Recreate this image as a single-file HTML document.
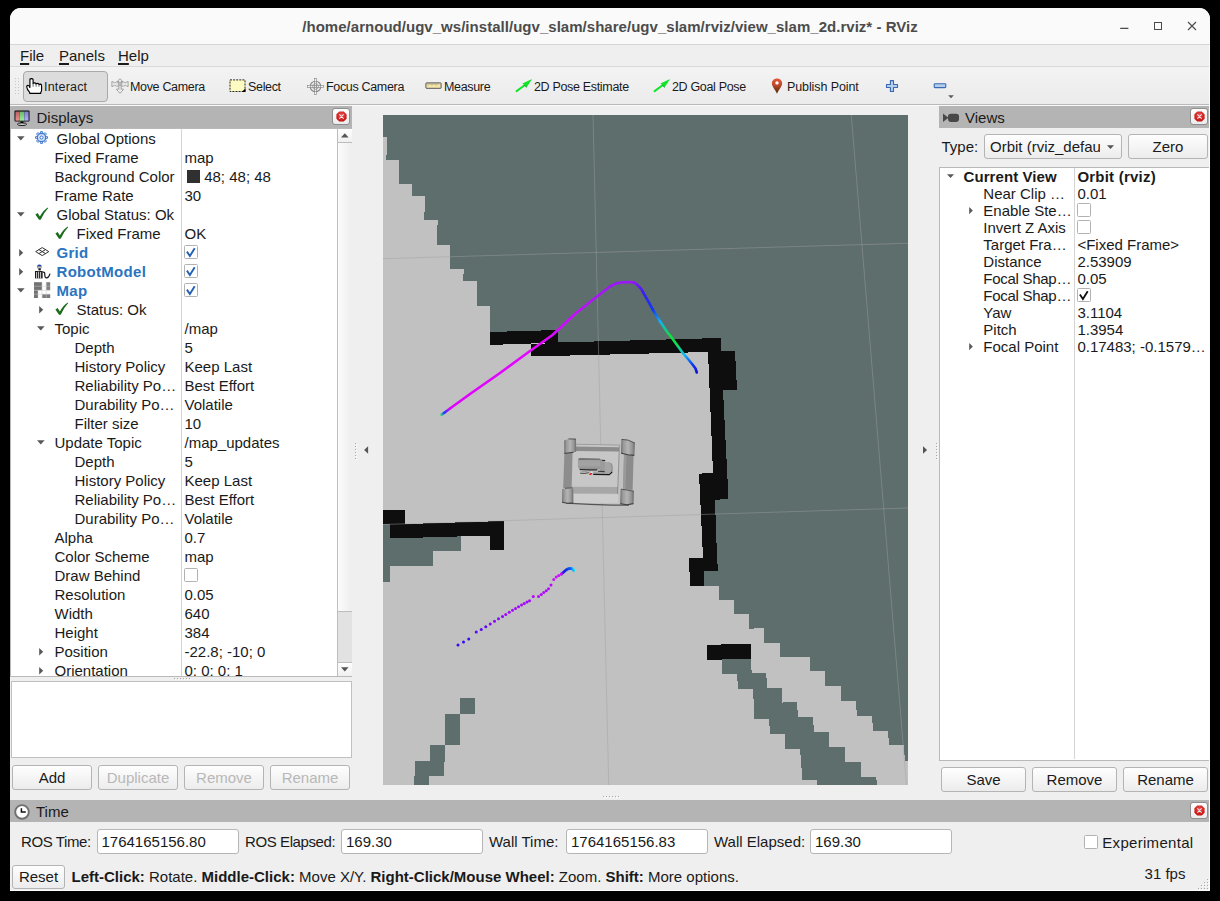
<!DOCTYPE html>
<html>
<head>
<meta charset="utf-8">
<title>RViz</title>
<style>
*{box-sizing:border-box;margin:0;padding:0}
html,body{width:1220px;height:901px;overflow:hidden;background:#000}
body{font-family:"Liberation Sans",sans-serif;font-size:15px;color:#1a1a1a;position:relative}
.abs{position:absolute}
#win{position:absolute;left:10px;top:8px;width:1200px;height:883px;background:#efefef;border-radius:11px 11px 0 0;overflow:hidden}
/* coordinates inside #win are page coords minus (10,8) */
#titlebar{position:absolute;left:0;top:0;width:1200px;height:37px;background:#fafafa;border-bottom:1px solid #d6d6d6}
#title{position:absolute;left:0;top:10px;width:1200px;text-align:center;font-weight:bold;font-size:15px;letter-spacing:0.03px;color:#4c4c4c;white-space:pre}
#menubar{position:absolute;left:0;top:37px;width:1200px;height:22px;background:#efefef;border-bottom:1px solid #d9d9d9}
.menu{position:absolute;top:2px;font-size:15px;color:#1a1a1a}
.menu u{text-decoration:underline;text-underline-offset:2px;text-decoration-thickness:1.6px}
#toolbar{position:absolute;left:0;top:59px;width:1200px;height:38px;background:linear-gradient(#f3f3f3,#ebebeb);border-bottom:1px solid #b9b9b9}
.tb{position:absolute;top:13px;font-size:12.5px;letter-spacing:-0.33px;color:#1a1a1a;white-space:pre;line-height:14px}
.dockhead{position:absolute;background:#b4b4b4;height:22px;font-size:15px;color:#1a1a1a}
.dockhead span{position:absolute;top:3px}
.closebtn{position:absolute;width:18px;height:17px;border:1px solid #8e8e8e;border-radius:3px;background:linear-gradient(#ffffff,#ebebeb)}
.closebtn svg{position:absolute;left:2.5px;top:1.5px}
.tree{position:absolute;background:#fff;overflow:hidden}
.row{position:absolute;left:0;height:19px;width:100%;white-space:pre;line-height:19px}
.row span{position:absolute;top:0}
.blue{color:#2b74c0;font-weight:bold;letter-spacing:0.3px}
.btn{position:absolute;height:25px;border:1px solid #b4b4b4;border-radius:3px;background:linear-gradient(#fefefe,#ececec);text-align:center;line-height:24px;font-size:15px;color:#1a1a1a}
.btn.dis{color:#b8b8b8}
.inp{position:absolute;height:25px;border:1px solid #b6b6b6;border-radius:3px;background:#fff;line-height:24px;padding-left:4px;font-size:15px}
.cb{position:absolute;width:14px;height:14px;border:1px solid #b2b2b2;background:#fff;border-radius:1.5px}
.lbl{position:absolute;white-space:pre;font-size:15px}
</style>
</head>
<body>
<svg width="0" height="0" style="position:absolute">
  <defs>
    <symbol id="i-gear" viewBox="0 0 17 17">
      <g transform="translate(6.5,7.5)">
        <g fill="#cfe0f7" stroke="#3d76cc" stroke-width="0.9">
          <rect x="-1.1" y="-6" width="2.2" height="12" rx="0.4"/>
          <rect x="-1.1" y="-6" width="2.2" height="12" rx="0.4" transform="rotate(45)"/>
          <rect x="-1.1" y="-6" width="2.2" height="12" rx="0.4" transform="rotate(90)"/>
          <rect x="-1.1" y="-6" width="2.2" height="12" rx="0.4" transform="rotate(135)"/>
        </g>
        <circle r="4.1" fill="#d3e2f8" stroke="#3d76cc" stroke-width="1.1"/>
        <circle r="1.5" fill="#fff" stroke="#3d76cc" stroke-width="1"/>
      </g>
    </symbol>
    <symbol id="i-check" viewBox="0 0 17 17">
      <path d="M0.4 8.6 L2.6 7 L4.9 10.6 Q8 4.6 12.7 1.6 L13.1 2.3 Q8.6 7 5.7 13.7 L4 13.7 Z" fill="#1b6c1b"/>
    </symbol>
    <symbol id="i-grid" viewBox="0 0 17 17">
      <path d="M0.7 7.6 L7.2 3.6 L13.8 7.6 L7.2 11.6 Z M3.95 5.6 L10.5 9.6 M10.5 5.6 L3.95 9.6" fill="#fff" stroke="#333" stroke-width="1" stroke-linejoin="round"/>
    </symbol>
    <symbol id="i-robot" viewBox="0 0 17 17">
      <path d="M3 3.6 Q3 1.4 5.4 1.4 Q7.8 1.4 7.8 3.6 Z" fill="#2244aa"/>
      <rect x="3.4" y="3.8" width="4" height="1.2" fill="#ddd" stroke="#555" stroke-width="0.4"/>
      <rect x="4.4" y="5.2" width="2.4" height="2.2" fill="#222"/>
      <path d="M1 8 H8.6 V15.4 H1 Z" fill="#1a1a1a"/>
      <path d="M2.6 9 V15.4 M4.6 8.6 V15.4 M6.6 9 V15.4" stroke="#e8e8e8" stroke-width="0.9"/>
      <path d="M8.6 9.2 Q11 8.6 10.8 11.6 Q10.6 15.2 13 14.8 Q15 14.4 16 10.6" fill="none" stroke="#1a1a1a" stroke-width="1.2"/>
    </symbol>
    <symbol id="i-map" viewBox="0 0 17 17">
      <rect x="0" y="0.2" width="16.2" height="15.8" fill="#fff"/>
      <g fill="#727272">
        <rect x="0" y="0.2" width="8" height="8"/><rect x="0" y="8.2" width="4" height="7.8"/>
        <rect x="12.2" y="0.2" width="4" height="8" fill="#808080"/>
        
        <rect x="8.2" y="12.2" width="8" height="3.8" fill="#7a7a7a"/>
      </g>
      <path d="M4 8.2V16M8 0.2V16M12.2 0.2V16M0 4.2H16.2M0 8.2H16.2M0 12.2H16.2" stroke="#c8c8c8" stroke-width="0.5" fill="none"/>
    </symbol>
  </defs>
</svg>
<div id="win">
  <div id="titlebar">
    <div id="title">/home/arnoud/ugv_ws/install/ugv_slam/share/ugv_slam/rviz/view_slam_2d.rviz* - RViz</div>
    <svg class="abs" style="left:1100px;top:8px" width="100" height="22" viewBox="0 0 100 22">
      <path d="M10.2 12.3h8.2" stroke="#4a4a4a" stroke-width="1.2" fill="none"/>
      <rect x="44.5" y="6.5" width="7" height="7" stroke="#4a4a4a" stroke-width="1" fill="none"/>
      <path d="M78 6l8 8M86 6l-8 8" stroke="#4a4a4a" stroke-width="1.1" fill="none"/>
    </svg>
  </div>
  <div id="menubar">
    <span class="menu" style="left:10px"><u>F</u>ile</span>
    <span class="menu" style="left:49px"><u>P</u>anels</span>
    <span class="menu" style="left:108px"><u>H</u>elp</span>
  </div>
  <div id="toolbar">
    <svg class="abs" style="left:4px;top:10px" width="6" height="18" viewBox="0 0 6 18"><g fill="#c6c6c6"><rect x="1" y="1" width="1" height="1"/><rect x="4" y="1" width="1" height="1"/><rect x="1" y="4" width="1" height="1"/><rect x="4" y="4" width="1" height="1"/><rect x="1" y="7" width="1" height="1"/><rect x="4" y="7" width="1" height="1"/><rect x="1" y="10" width="1" height="1"/><rect x="4" y="10" width="1" height="1"/><rect x="1" y="13" width="1" height="1"/><rect x="4" y="13" width="1" height="1"/><rect x="1" y="16" width="1" height="1"/><rect x="4" y="16" width="1" height="1"/></g></svg>
    <div class="abs" style="left:13px;top:4px;width:85px;height:31px;background:#dcdcdc;border:1px solid #a9a9a9;border-radius:4px"></div>
    <!-- hand -->
    <svg class="abs" style="left:16px;top:11px" width="17" height="17" viewBox="0 0 17 17"><path d="M3.9 9.4 V1.7 Q3.9 0.55 5.5 0.55 Q7.1 0.55 7.1 1.7 V5.7 Q7.3 4.9 8.6 4.9 Q10 4.9 10.1 6.1 Q10.4 5.4 11.6 5.4 Q12.9 5.4 13 6.7 Q13.4 6.1 14.4 6.1 Q15.6 6.2 15.6 7.7 V12 Q15.6 13.4 14.8 14.1 V15.3 H3.7 V14.3 Q0.9 11.5 0.7 8.8 Q0.7 7.3 1.9 7.3 Q3 7.4 3.9 9.4 Z" fill="#fff" stroke="#000" stroke-width="1.15" stroke-linejoin="round"/><path d="M7.1 5.7 V8.8 M10.1 6 V8.8 M13 6.6 V8.8" stroke="#666" stroke-width="0.9" fill="none"/></svg>
    <span class="tb" style="left:34px;letter-spacing:0.2px">Interact</span>
    <!-- move camera -->
    <svg class="abs" style="left:101px;top:11px" width="18" height="17" viewBox="0 0 18 17"><g fill="#f4f4f4" stroke="#8a8a8a" stroke-width="0.75" stroke-linejoin="round"><path d="M0.9 3.4 L3.6 4.8 L5.4 4.2 L12.6 4.2 L14.4 4.8 L17.1 3.4 L17.1 8.6 L14.4 7.4 L12.6 8.1 L5.4 8.1 L3.6 7.4 L0.9 8.6 Z"/><path d="M9 0.7 L11.8 3.5 L10.1 3.5 L10.1 11.2 L12.6 11.2 L9 15.4 L5.4 11.2 L7.9 11.2 L7.9 3.5 L6.2 3.5 Z"/></g><ellipse cx="9" cy="6.1" rx="2.1" ry="1.4" fill="#c4c4c4" stroke="#909090" stroke-width="0.5"/><path d="M9 1.5V14.4M1.6 6.1H16.4" stroke="#a8a8a8" stroke-width="0.45" stroke-dasharray="1 0.8" fill="none"/></svg>
    <span class="tb" style="left:120px">Move Camera</span>
    <!-- select -->
    <svg class="abs" style="left:219px;top:11px" width="17" height="15" viewBox="0 0 17 15"><rect x="1" y="1.9" width="15" height="11.6" fill="#fdfac2" stroke="#111" stroke-width="0.9" stroke-dasharray="2 1.1"/><path d="M16.5 10.2 V14 H12.7 Z" fill="#000"/></svg>
    <span class="tb" style="left:238px">Select</span>
    <!-- focus camera -->
    <svg class="abs" style="left:297px;top:11px" width="17" height="17" viewBox="0 0 17 17"><circle cx="8.5" cy="8.5" r="5.3" fill="#efefef" stroke="#8a8a8a" stroke-width="1.1"/><circle cx="8.5" cy="8.5" r="3" fill="#e4e4e4" stroke="#999" stroke-width="0.7"/><g fill="none" stroke="#888" stroke-width="0.7"><rect x="7.5" y="0.6" width="2" height="15.8"/><rect x="0.6" y="7.5" width="15.8" height="2"/></g><rect x="7.9" y="1" width="1.2" height="2.2" fill="#f4f4f4"/><rect x="7.9" y="13.8" width="1.2" height="2.2" fill="#f4f4f4"/><rect x="1" y="7.9" width="2.2" height="1.2" fill="#f4f4f4"/><rect x="13.8" y="7.9" width="2.2" height="1.2" fill="#f4f4f4"/></svg>
    <span class="tb" style="left:316px">Focus Camera</span>
    <!-- measure -->
    <svg class="abs" style="left:415px;top:15.4px" width="17" height="8" viewBox="0 0 17 8"><rect x="0.9" y="0.9" width="15.2" height="5.4" rx="0.4" fill="#f3e6ac" stroke="#555" stroke-width="1"/><path d="M3 1.4v2M5 1.4v1.4M7 1.4v2M9 1.4v1.4M11 1.4v2M13 1.4v1.4" stroke="#8a8060" stroke-width="0.7"/></svg>
    <span class="tb" style="left:434px">Measure</span>
    <!-- pose estimate -->
    <svg class="abs" style="left:505px;top:11px" width="18" height="16" viewBox="0 0 18 16"><path d="M1.6 13.1 L9.6 7.3" stroke="#12e42a" stroke-width="2" stroke-linecap="round"/><path d="M17.1 1.1 L7.4 5.5 L11.7 9.3 Z" fill="#12e42a"/><path d="M11.8 9.4 L9.6 7.5" stroke="#1c7a2c" stroke-width="0.8"/></svg>
    <span class="tb" style="left:524px">2D Pose Estimate</span>
    <svg class="abs" style="left:643px;top:11px" width="18" height="16" viewBox="0 0 18 16"><path d="M1.6 13.1 L9.6 7.3" stroke="#12e42a" stroke-width="2" stroke-linecap="round"/><path d="M17.1 1.1 L7.4 5.5 L11.7 9.3 Z" fill="#12e42a"/><path d="M11.8 9.4 L9.6 7.5" stroke="#1c7a2c" stroke-width="0.8"/></svg>
    <span class="tb" style="left:662px">2D Goal Pose</span>
    <!-- publish point -->
    <svg class="abs" style="left:761px;top:11px" width="12" height="17" viewBox="0 0 12 17"><defs><linearGradient id="pin" x1="0" y1="0" x2="0" y2="1"><stop offset="0" stop-color="#e8583a"/><stop offset="0.45" stop-color="#b8482a"/><stop offset="1" stop-color="#4a2808"/></linearGradient></defs><path d="M6 0.6 C2.8 0.6 0.9 2.8 0.9 5.4 C0.9 8.4 4.2 11.4 6 15.8 C7.8 11.4 11.1 8.4 11.1 5.4 C11.1 2.8 9.2 0.6 6 0.6 Z" fill="url(#pin)"/><circle cx="6" cy="4.9" r="1.7" fill="#fff"/></svg>
    <span class="tb" style="left:777px;letter-spacing:-0.1px">Publish Point</span>
    <!-- plus / minus -->
    <svg class="abs" style="left:875px;top:12px" width="14" height="14" viewBox="0 0 14 14"><path d="M5.4 1.6 H8.5 V5.5 H12.5 V8.5 H8.5 V12.5 H5.4 V8.5 H1.5 V5.5 H5.4 Z" fill="#b4cdec" stroke="#3a68b2" stroke-width="1.1" stroke-linejoin="round"/></svg>
    <svg class="abs" style="left:923px;top:16px" width="14" height="6" viewBox="0 0 14 6"><rect x="1.2" y="0.8" width="11.6" height="3.8" rx="0.8" fill="#b4cdec" stroke="#3a68b2" stroke-width="1.1"/></svg>
    <svg class="abs" style="left:938px;top:28px" width="6" height="4" viewBox="0 0 6 4"><path d="M0.2 0.3 H5.8 L3 3.2 Z" fill="#5a5a5a"/></svg>

  </div>

  <div class="abs" style="left:0;top:97px;width:1200px;height:1px;background:#f8f8f8"></div>
  <!-- Displays dock -->
  <div class="dockhead" style="left:0px;top:98px;width:342px;height:23px"><span style="left:26.5px">Displays</span>
    <svg class="abs" style="left:3px;top:3px" width="18" height="18" viewBox="0 0 18 18"><defs><linearGradient id="mr" x1="0" y1="0" x2="0" y2="1"><stop offset="0" stop-color="#b86060"/><stop offset="1" stop-color="#f09090"/></linearGradient><linearGradient id="mg" x1="0" y1="0" x2="0" y2="1"><stop offset="0" stop-color="#68b868"/><stop offset="1" stop-color="#98f098"/></linearGradient><linearGradient id="mb" x1="0" y1="0" x2="0" y2="1"><stop offset="0" stop-color="#8080c8"/><stop offset="1" stop-color="#b0b0ff"/></linearGradient></defs>
      <rect x="1.5" y="1.6" width="15" height="11" rx="1" fill="#000"/>
      <rect x="2.4" y="2.5" width="4.3" height="9.2" fill="url(#mr)"/><rect x="6.7" y="2.5" width="4.6" height="9.2" fill="url(#mg)"/><rect x="11.3" y="2.5" width="4.3" height="9.2" fill="url(#mb)"/>
      <path d="M7.6 12.6 H10.4 V14 H7.6 Z" fill="#000"/>
      <ellipse cx="9" cy="15.2" rx="4.6" ry="1.3" fill="#d8d8d8" stroke="#000" stroke-width="0.9"/>
    </svg></div>
  <div class="closebtn" style="left:322px;top:100px"><svg width="11" height="11" viewBox="0 0 11 11"><defs><radialGradient id="RG" cx="0.5" cy="0.35" r="0.7"><stop offset="0" stop-color="#e85050"/><stop offset="1" stop-color="#c40808"/></radialGradient></defs><path d="M3.3 0.4H7.7L10.6 3.3V7.7L7.7 10.6H3.3L0.4 7.7V3.3Z" fill="url(#RG)"/><path d="M3.6 3.6L7.4 7.4M7.4 3.6L3.6 7.4" stroke="#fff" stroke-width="1.05" stroke-linecap="round" opacity="0.85"/></svg></div>
  <div class="tree" id="dtree" style="left:0px;top:120px;width:342px;height:549px;border:1px solid #b9b9b9;border-right:none">
    <div class="abs" style="left:0;top:0;width:327px;height:547px;overflow:hidden">
<div class="row" style="top:0px"><svg class="abs" style="left:5.9px;top:7px" width="8" height="5"><path d="M0 0.2H7.6L3.8 4.6Z" fill="#585858"/></svg><svg class="abs" style="left:24.0px;top:1px" width="17" height="17"><use href="#i-gear"/></svg><span style="left:45.5px">Global Options</span></div>
<div class="row" style="top:19px"><span style="left:43.5px">Fixed Frame</span><span style="left:173.5px">map</span></div>
<div class="row" style="top:38px"><span style="left:43.5px">Background Color</span><i class="abs" style="left:176.0px;top:3px;width:13px;height:13px;background:#303030"></i><span style="left:193.2px">48; 48; 48</span></div>
<div class="row" style="top:57px"><span style="left:43.5px">Frame Rate</span><span style="left:173.5px">30</span></div>
<div class="row" style="top:76px"><svg class="abs" style="left:5.9px;top:7px" width="8" height="5"><path d="M0 0.2H7.6L3.8 4.6Z" fill="#585858"/></svg><svg class="abs" style="left:24.0px;top:1px" width="17" height="17"><use href="#i-check"/></svg><span style="left:45.5px">Global Status: Ok</span></div>
<div class="row" style="top:95px"><svg class="abs" style="left:44.0px;top:1px" width="17" height="17"><use href="#i-check"/></svg><span style="left:65.5px">Fixed Frame</span><span style="left:173.5px">OK</span></div>
<div class="row" style="top:114px"><svg class="abs" style="left:8.0px;top:5.5px" width="5" height="8"><path d="M0.2 0V7.6L4.2 3.8Z" fill="#585858"/></svg><svg class="abs" style="left:24.0px;top:1px" width="17" height="17"><use href="#i-grid"/></svg><span class="blue" style="left:45.5px">Grid</span><i class="cb" style="left:173px;top:2px"></i><svg class="abs" style="left:173px;top:2px" width="14" height="14"><path d="M2.9 6.6L5.9 11L10.7 3.2" fill="none" stroke="#2461b3" stroke-width="1.9"/></svg></div>
<div class="row" style="top:133px"><svg class="abs" style="left:8.0px;top:5.5px" width="5" height="8"><path d="M0.2 0V7.6L4.2 3.8Z" fill="#585858"/></svg><svg class="abs" style="left:23.0px;top:1px" width="17" height="17"><use href="#i-robot"/></svg><span class="blue" style="left:45.5px">RobotModel</span><i class="cb" style="left:173px;top:2px"></i><svg class="abs" style="left:173px;top:2px" width="14" height="14"><path d="M2.9 6.6L5.9 11L10.7 3.2" fill="none" stroke="#2461b3" stroke-width="1.9"/></svg></div>
<div class="row" style="top:152px"><svg class="abs" style="left:5.9px;top:7px" width="8" height="5"><path d="M0 0.2H7.6L3.8 4.6Z" fill="#585858"/></svg><svg class="abs" style="left:23.0px;top:1px" width="17" height="17"><use href="#i-map"/></svg><span class="blue" style="left:45.5px">Map</span><i class="cb" style="left:173px;top:2px"></i><svg class="abs" style="left:173px;top:2px" width="14" height="14"><path d="M2.9 6.6L5.9 11L10.7 3.2" fill="none" stroke="#2461b3" stroke-width="1.9"/></svg></div>
<div class="row" style="top:171px"><svg class="abs" style="left:28.4px;top:5.5px" width="5" height="8"><path d="M0.2 0V7.6L4.2 3.8Z" fill="#585858"/></svg><svg class="abs" style="left:44.0px;top:1px" width="17" height="17"><use href="#i-check"/></svg><span style="left:65.5px">Status: Ok</span></div>
<div class="row" style="top:190px"><svg class="abs" style="left:25.9px;top:7px" width="8" height="5"><path d="M0 0.2H7.6L3.8 4.6Z" fill="#585858"/></svg><span style="left:43.5px">Topic</span><span style="left:173.5px">/map</span></div>
<div class="row" style="top:209px"><span style="left:63.5px">Depth</span><span style="left:173.5px">5</span></div>
<div class="row" style="top:228px"><span style="left:63.5px">History Policy</span><span style="left:173.5px">Keep Last</span></div>
<div class="row" style="top:247px"><span style="left:63.5px">Reliability Po…</span><span style="left:173.5px">Best Effort</span></div>
<div class="row" style="top:266px"><span style="left:63.5px">Durability Po…</span><span style="left:173.5px">Volatile</span></div>
<div class="row" style="top:285px"><span style="left:63.5px">Filter size</span><span style="left:173.5px">10</span></div>
<div class="row" style="top:304px"><svg class="abs" style="left:25.9px;top:7px" width="8" height="5"><path d="M0 0.2H7.6L3.8 4.6Z" fill="#585858"/></svg><span style="left:43.5px">Update Topic</span><span style="left:173.5px">/map_updates</span></div>
<div class="row" style="top:323px"><span style="left:63.5px">Depth</span><span style="left:173.5px">5</span></div>
<div class="row" style="top:342px"><span style="left:63.5px">History Policy</span><span style="left:173.5px">Keep Last</span></div>
<div class="row" style="top:361px"><span style="left:63.5px">Reliability Po…</span><span style="left:173.5px">Best Effort</span></div>
<div class="row" style="top:380px"><span style="left:63.5px">Durability Po…</span><span style="left:173.5px">Volatile</span></div>
<div class="row" style="top:399px"><span style="left:43.5px">Alpha</span><span style="left:173.5px">0.7</span></div>
<div class="row" style="top:418px"><span style="left:43.5px">Color Scheme</span><span style="left:173.5px">map</span></div>
<div class="row" style="top:437px"><span style="left:43.5px">Draw Behind</span><i class="cb" style="left:173px;top:2px"></i></div>
<div class="row" style="top:456px"><span style="left:43.5px">Resolution</span><span style="left:173.5px">0.05</span></div>
<div class="row" style="top:475px"><span style="left:43.5px">Width</span><span style="left:173.5px">640</span></div>
<div class="row" style="top:494px"><span style="left:43.5px">Height</span><span style="left:173.5px">384</span></div>
<div class="row" style="top:513px"><svg class="abs" style="left:28.4px;top:5.5px" width="5" height="8"><path d="M0.2 0V7.6L4.2 3.8Z" fill="#585858"/></svg><span style="left:43.5px">Position</span><span style="left:173.5px">-22.8; -10; 0</span></div>
<div class="row" style="top:532px"><svg class="abs" style="left:28.4px;top:5.5px" width="5" height="8"><path d="M0.2 0V7.6L4.2 3.8Z" fill="#585858"/></svg><span style="left:43.5px">Orientation</span><span style="left:173.5px">0; 0; 0; 1</span></div>
    </div>
    <div class="abs" style="left:170px;top:0;width:1px;height:547px;background:#d4d4d4"></div>
    <!-- scrollbar -->
    <div class="abs" style="left:326px;top:0;width:16px;height:547px;background:linear-gradient(90deg,#fbfbfb,#eeeeee);border-left:1px solid #bdbdbd;border-right:1px solid #bdbdbd"></div>
    <div class="abs" style="left:326px;top:0;width:16px;height:14px;border:1px solid #bdbdbd;border-top:none;background:linear-gradient(#fefefe,#f0f0f0)"></div>
    <svg class="abs" style="left:330px;top:4px" width="8" height="5"><path d="M0 4.4H7.6L3.8 0.2Z" fill="#555"/></svg>
    <div class="abs" style="left:326px;top:482px;width:16px;height:52px;border:1px solid #bdbdbd;background:#e2e2e2"></div>
    <div class="abs" style="left:326px;top:533px;width:16px;height:14px;border:1px solid #bdbdbd;border-bottom:none;background:linear-gradient(#fefefe,#f0f0f0)"></div>
    <svg class="abs" style="left:330px;top:538px" width="8" height="5"><path d="M0 0.2H7.6L3.8 4.4Z" fill="#555"/></svg>
  </div>
  <div class="abs" style="left:1px;top:673px;width:341px;height:77px;background:#fff;border:1px solid #c0c0c0"></div>
  <div class="btn" style="left:2px;top:757px;width:80px">Add</div>
  <div class="btn dis" style="left:88px;top:757px;width:80px">Duplicate</div>
  <div class="btn dis" style="left:174px;top:757px;width:80px">Remove</div>
  <div class="btn dis" style="left:260px;top:757px;width:80px">Rename</div>

  <!-- viewport -->
  <div class="abs" id="vp" style="left:373px;top:107px;width:525px;height:670px;background:#5d6e6c;overflow:hidden">
    <svg width="525" height="670" viewBox="383 115 525 670" style="position:absolute;left:0;top:0" shape-rendering="crispEdges">
  <rect x="383" y="115" width="525" height="670" fill="#5d6e6c"/>
  <!-- free space -->
  <polygon fill="#c1c1c1" points="383,136.75 387,136.75 387,155 386,155 386,160 399,160 399,183.75 412,183.75 412,196.25 425,196.25 425,212 424,212 424,220 438,220 438,225 437,225 437,244.5 450,244.5 450,268.75 464,268.75 464,273.75 463,273.75 463,281.25 477,281.25 477,306.25 490,306.25 490,338 558,338 558,348 715,345 718,480 710,500 712,565 704,570.5 704,586.25 719,586.25 719,600 734,600 734,613.75 749,613.75 749,628.75 764,628 764,642.5 779.5,642.5 780,657 809.5,657 810,671.25 825,671.25 825,685.75 840.5,685.75 841,700.5 855.75,700.5 857,715.5 872,715.5 873,730.5 888,730.5 889,745.5 903.75,745 905,760.75 908,760.75 908,785 383,785"/>
  <!-- unknown patches over free -->
  <g fill="#5d6e6c">
    <polygon points="383,523.75 391,523.75 391,537 461,535.5 461,550.5 433,550.5 433,566 390,566 390,582 383,582"/>
    <rect x="460" y="698" width="15" height="15.5"/>
    <rect x="445" y="713.5" width="15" height="31"/>
    <rect x="430" y="744.5" width="15" height="17"/>
    <rect x="415" y="761" width="29" height="15"/>
    <rect x="414" y="775.75" width="15" height="10"/>
    <polygon points="750.75,658.75 751.75,673 766.25,673 767,688 782,688 782.5,702.5 797,702 798,717.5 813,717 814,732 828.75,732 829.5,746.5 844.5,746.5 845.5,762 860.5,762 861.25,777.5 876.25,777 877,785 817.5,785 817,779.5 802.5,780 800,748.75 785.5,748.75 785,733.75 770,733.75 769,718.75 754.5,718.75 753,688.75 738,688.75 737,673.75 722.5,673.75 722,659"/>
  </g>
  <!-- occupied -->
  <g fill="#0e0e0e">
    <polygon points="490,332 558,330 558,342.5 490,345"/>
    <polygon points="531,344.5 558,342.5 720.5,338 720.5,351.25 735,351 737,389.5 723,390.5 728.5,498.75 715,500 717,557.5 718,570.5 704,570.5 704,586.25 690,586.25 689,557.5 703,557.5 699,473.75 713,472.5 708,352 531,356.5"/>
    <polygon points="383,510.5 405,510 405,523.5 383,524"/>
    <polygon points="390,524.5 504,521 504,549.5 490,550 490,535.5 390,538.5"/>
    <polygon points="707,645 721,645 721,644 750.5,644 750.75,658.75 722,659.5 707,660"/>
  </g>
  <!-- grid -->
  <g stroke="#a0a0a4" stroke-opacity="0.45" stroke-width="1" fill="none" shape-rendering="auto">
    <line x1="593" y1="115" x2="608.75" y2="785"/>
    <line x1="851.25" y1="115" x2="906.5" y2="785"/>
    <line x1="383" y1="258.7" x2="908" y2="243.25"/>
    <line x1="383" y1="524.5" x2="908" y2="508"/>
  </g>
  <defs>
    <linearGradient id="g1" gradientUnits="userSpaceOnUse" x1="441" y1="415" x2="450" y2="408.5">
      <stop offset="0" stop-color="#20e070"/><stop offset="0.35" stop-color="#2030ff"/><stop offset="1" stop-color="#d010ff"/>
    </linearGradient>
    <linearGradient id="g2" gradientUnits="userSpaceOnUse" x1="450" y1="408" x2="616" y2="283">
      <stop offset="0" stop-color="#e000ff"/><stop offset="0.55" stop-color="#e408ff"/><stop offset="1" stop-color="#9a18f8"/>
    </linearGradient>
    <linearGradient id="g3" gradientUnits="userSpaceOnUse" x1="634" y1="283" x2="697" y2="373">
      <stop offset="0" stop-color="#8a18f6"/><stop offset="0.12" stop-color="#3a20f0"/><stop offset="0.3" stop-color="#1038f0"/><stop offset="0.42" stop-color="#10b0f8"/><stop offset="0.58" stop-color="#10e040"/><stop offset="0.68" stop-color="#10e050"/><stop offset="0.8" stop-color="#10b8f8"/><stop offset="0.92" stop-color="#1030f0"/><stop offset="1" stop-color="#1010d0"/>
    </linearGradient>
    <linearGradient id="g4" gradientUnits="userSpaceOnUse" x1="561" y1="574" x2="574" y2="570">
      <stop offset="0" stop-color="#6010f0"/><stop offset="0.3" stop-color="#1020e8"/><stop offset="0.78" stop-color="#1058f0"/><stop offset="1" stop-color="#10e0f8"/>
    </linearGradient>
  </defs>
  <g fill="none" stroke-width="2.6" stroke-linecap="round" stroke-linejoin="round" shape-rendering="auto">
    <polyline stroke="url(#g1)" points="441.5,414.7 445,412.2 450,408.5"/>
    <polyline stroke="url(#g2)" points="450,408.5 470,394 500,373 530,351 552.5,335 575,314 592.5,300 610,286.5 616.25,283.4"/>
    <polyline stroke="#9a18f8" points="616.25,283.4 623,282.3 630,282 634,282.6"/>
    <polyline stroke="url(#g3)" points="634,282.6 636.5,284 641.25,289 647.5,300 653.75,311.25 657.5,317.5 667.5,332.5 670.5,336 677,345 682.5,352.5 688,359 692.5,364.5 695.5,368.5 696.8,372.5"/>
    <polyline stroke="url(#g4)" stroke-width="2.8" points="561.5,574 563.75,572 566,570 568.75,568.6 571,568.3 572.7,568.8 573.8,570.5"/>
  </g>
  <g shape-rendering="auto">
    <g fill="#3a08f8"><circle cx="458" cy="645" r="1.5"/><circle cx="463.5" cy="642" r="1.5"/><circle cx="468.75" cy="639" r="1.5"/></g>
    <g fill="#5a08f4"><circle cx="476.25" cy="632" r="1.5"/><circle cx="481.25" cy="629.5" r="1.5"/><circle cx="485.75" cy="626.75" r="1.5"/></g>
    <g fill="#8408f8"><circle cx="490.25" cy="624" r="1.5"/><circle cx="494.5" cy="621.25" r="1.5"/><circle cx="498.5" cy="618.75" r="1.5"/><circle cx="502.5" cy="616.5" r="1.5"/></g>
    <g fill="#a008fc"><circle cx="505.75" cy="614.5" r="1.5"/><circle cx="509.25" cy="612.25" r="1.5"/><circle cx="512.5" cy="610.25" r="1.5"/><circle cx="515.5" cy="608.5" r="1.5"/><circle cx="518.5" cy="606.75" r="1.5"/><circle cx="521.5" cy="605" r="1.5"/><circle cx="524.25" cy="603.5" r="1.5"/><circle cx="527" cy="602" r="1.5"/><circle cx="529.5" cy="600.75" r="1.5"/></g>
    <g fill="#b408fc"><circle cx="533.25" cy="596.5" r="1.5"/><circle cx="538.5" cy="596.5" r="1.5"/><circle cx="541.25" cy="594.5" r="1.5"/><circle cx="543.75" cy="592.5" r="1.5"/><circle cx="546.25" cy="590.75" r="1.5"/><circle cx="548.5" cy="588.75" r="1.5"/><circle cx="551" cy="585" r="1.5"/></g>
    <g fill="#c810fc"><circle cx="553.75" cy="579.5" r="1.5"/><circle cx="556.25" cy="577" r="1.5"/><circle cx="558.75" cy="575.5" r="1.5"/><circle cx="561.25" cy="574" r="1.5"/></g>
  </g>

  <defs>
    <linearGradient id="wh" x1="0" y1="0" x2="1" y2="0">
      <stop offset="0" stop-color="#6c6c6c"/><stop offset="0.18" stop-color="#9a9a9a"/><stop offset="0.5" stop-color="#b4b4b4"/><stop offset="0.8" stop-color="#969696"/><stop offset="1" stop-color="#6a6a6a"/>
    </linearGradient>
    <linearGradient id="ld2" x1="0" y1="0" x2="0" y2="1"><stop offset="0" stop-color="#a0a0a0"/><stop offset="0.5" stop-color="#a4a4a4"/><stop offset="0.75" stop-color="#9a9a9a"/><stop offset="1" stop-color="#8c8c8c"/></linearGradient>
    <linearGradient id="ld" x1="0" y1="0" x2="0" y2="1">
      <stop offset="0" stop-color="#868686"/><stop offset="0.25" stop-color="#8e8e8e"/><stop offset="0.3" stop-color="#a6a6a6"/><stop offset="0.8" stop-color="#9c9c9c"/><stop offset="1" stop-color="#7c7c7c"/>
    </linearGradient>
  </defs>
  <g shape-rendering="auto">
    <!-- chassis plate -->
    <polygon points="572.2,444 619.6,445 618,502.8 572.4,503.2" fill="#c7c7c7"/>
    <polygon points="573,494 618,494.4 618,502.8 572.6,503.2" fill="#cdcdcd"/>
    <polyline points="575,444.3 597,444.6 620.5,445.2" stroke="#8c8c8c" stroke-width="0.7" fill="none"/>
    <!-- bars -->
    <polygon points="574.3,446.6 619,447.2 618.9,451.4 574.2,451" fill="#8c8c8c"/>
    <polygon points="572.2,486.8 618,487 617.9,493.8 572.2,493.6" fill="#a7a7a7"/>
    <polygon points="564.4,453.4 572.6,452.6 571.6,487.8 563.2,488.2" fill="#8d8d8d"/>
    <polygon points="624,454.4 633.6,455.6 632.6,490 623.1,489.2" fill="#8b8b8b"/>
    <polygon points="624,454.4 626.5,454.7 625.6,489.4 623.1,489.2" fill="#9a9a9a"/>
    <line x1="619.4" y1="446" x2="617.6" y2="494" stroke="#6e6e6e" stroke-width="0.6"/>
    <!-- bottom edge -->
    <polyline points="566,503.2 590,504.4 612,505.2 629,505.2" stroke="#555" stroke-width="1.3" fill="none"/>
    <!-- wheels -->
    <polygon points="564.2,440.4 569,438.8 576,439 576.2,451.8 570,453 564.3,453.6" fill="url(#wh)"/>
    <polyline points="568.5,438.9 576,439.1" stroke="#4a4a4a" stroke-width="0.9" fill="none"/>
    <polyline points="564.3,453.4 570,452.8 573.6,452.2" stroke="#3c3c3c" stroke-width="1" fill="none"/>
    <polygon points="621.4,439.3 628,440 634.9,443 634.4,455.6 628,454.8 621,453.2" fill="url(#wh)"/>
    <polyline points="621.6,439.4 628,440.1 634.8,443" stroke="#4a4a4a" stroke-width="0.9" fill="none"/>
    <polyline points="621.2,453.2 628,454.7 634.2,455.4" stroke="#3c3c3c" stroke-width="1.1" fill="none"/>
    <polygon points="562.4,489 567,488.2 573.2,488.4 573.4,502.8 567,503.2 562,502.4" fill="url(#wh)"/>
    <polyline points="565,488.3 572.6,487.8" stroke="#4a4a4a" stroke-width="0.9" fill="none"/>
    <polyline points="562.2,502.3 567,503.2 573.2,503" stroke="#3c3c3c" stroke-width="1" fill="none"/>
    <polygon points="620.6,489.4 627,490 633.9,491.2 633.6,503.6 627,504.8 620.2,504" fill="url(#wh)"/>
    <polyline points="620.8,489.2 627,490 633.8,491.2" stroke="#4a4a4a" stroke-width="0.9" fill="none"/>
    <polyline points="620.4,503.8 627,504.7 633.4,503.6" stroke="#3c3c3c" stroke-width="1.1" fill="none"/>
    <!-- lidar -->
    <path d="M605,461.9 L609,461.9 Q612.6,463.4 612.6,467 L612.6,471.6 L609.6,474.6 L593.4,474.6 L593.4,471.6 L605,471.6 Z" fill="#a6a6a6"/>
    <path d="M610.6,463.2 Q612.2,465 612.1,467.5 L612.1,471.4" stroke="#8e8e8e" stroke-width="1.1" fill="none"/>
    <rect x="579.8" y="470.2" width="13.6" height="3.5" fill="#b6b6b6"/>
    <path d="M580.2,473.3 L585,473.5 L588.8,472.6" stroke="#2a2a2a" stroke-width="0.7" fill="none"/>
    <path d="M581.5,471.3 L587,471.6" stroke="#8a8a8a" stroke-width="0.6" fill="none"/>
    <rect x="599.6" y="460.4" width="5.5" height="11.8" fill="#9c9c9c"/>
    <path d="M601.8,460.2 L605.2,460.5" stroke="#1e1e1e" stroke-width="1" fill="none"/>
    <path d="M598,471.2 L604.6,471.6" stroke="#3a3a3a" stroke-width="1.1" fill="none"/>
    <path d="M578,460.4 Q578,458.1 580,458.1 L599.6,458.4 L602,460.4 Z" fill="#747474"/>
    <path d="M577.9,460.3 L600,460.3 L600,469.2 L580.2,469.4 Q577.9,468.2 577.9,466 Z" fill="url(#ld2)"/>
    <path d="M579.6,469.5 L590,469.9 L597.4,469.9" stroke="#262626" stroke-width="1.2" fill="none"/>
    <path d="M593.2,474.4 L609.4,474.6 L612.2,472" stroke="#161616" stroke-width="1.1" fill="none" stroke-linejoin="round"/>
    <circle cx="591.7" cy="472.2" r="1" fill="#e2e6e6"/>
    <ellipse cx="590.7" cy="474" rx="1.6" ry="0.85" fill="#f01010" transform="rotate(-25 590.7 474)"/>
  </g>

</svg>

  </div>

  <!-- Views dock -->
  <div class="dockhead" style="left:929px;top:98px;width:271px"><span style="left:26px">Views</span>
    <svg class="abs" style="left:3px;top:6px" width="18" height="11" viewBox="0 0 18 11"><path d="M1 1.6 L6.4 5.8 L1 10 Z" fill="#484848"/><rect x="6" y="1.7" width="11" height="8.2" rx="2.8" fill="#484848"/></svg></div>
  <div class="closebtn" style="left:1180px;top:100px"><svg width="11" height="11" viewBox="0 0 11 11"><defs><radialGradient id="RG" cx="0.5" cy="0.35" r="0.7"><stop offset="0" stop-color="#e85050"/><stop offset="1" stop-color="#c40808"/></radialGradient></defs><path d="M3.3 0.4H7.7L10.6 3.3V7.7L7.7 10.6H3.3L0.4 7.7V3.3Z" fill="url(#RG)"/><path d="M3.6 3.6L7.4 7.4M7.4 3.6L3.6 7.4" stroke="#fff" stroke-width="1.05" stroke-linecap="round" opacity="0.85"/></svg></div>
  <span class="lbl" style="left:931.5px;top:130px">Type:</span>
  <div class="btn" style="left:974px;top:126px;width:138px;height:25px;text-align:left;padding-left:5px;line-height:23px;overflow:hidden"><span style="display:block;width:110px;overflow:hidden;white-space:pre">Orbit (rviz_default_plugins)</span></div>
  <svg class="abs" style="left:1096.6px;top:137px" width="8" height="5"><path d="M0 0.2H7L3.5 4Z" fill="#555"/></svg>
  <div class="btn" style="left:1118px;top:126px;width:80px;height:25px;line-height:23px">Zero</div>
  <div class="tree" style="left:929px;top:158.5px;width:271px;height:594px;border:1px solid #b9b9b9">
  <div class="abs" style="left:134px;top:0;width:1px;height:591px;background:#d4d4d4"></div>
  <div class="row" style="top:0.0px;height:17px;line-height:17px">
  <svg class="abs" style="left:6.5px;top:6.5px" width="8" height="5"><path d="M0 0.2H7L3.5 4Z" fill="#585858"/></svg>
  <span style="left:23.5px;font-weight:bold;letter-spacing:0.08px">Current View</span>
  <span style="left:137.4px;font-weight:bold;letter-spacing:0.22px">Orbit (rviz)</span>
  </div>
  <div class="row" style="top:17.0px;height:17px;line-height:17px">
  <span style="left:43.3px">Near Clip …</span>
  <span style="left:137.4px">0.01</span>
  </div>
  <div class="row" style="top:34.0px;height:17px;line-height:17px">
  <svg class="abs" style="left:28.5px;top:5px" width="5" height="8"><path d="M0.2 0V7.2L3.8 3.6Z" fill="#585858"/></svg>
  <span style="left:43.3px">Enable Ste…</span>
  <i class="cb" style="left:137.4px;top:1px"></i>
  </div>
  <div class="row" style="top:51.0px;height:17px;line-height:17px">
  <span style="left:43.3px">Invert Z Axis</span>
  <i class="cb" style="left:137.4px;top:1px"></i>
  </div>
  <div class="row" style="top:68.0px;height:17px;line-height:17px">
  <span style="left:43.3px">Target Fra…</span>
  <span style="left:137.4px">&lt;Fixed Frame&gt;</span>
  </div>
  <div class="row" style="top:85.0px;height:17px;line-height:17px">
  <span style="left:43.3px">Distance</span>
  <span style="left:137.4px">2.53909</span>
  </div>
  <div class="row" style="top:102.0px;height:17px;line-height:17px">
  <span style="left:43.3px;letter-spacing:-0.28px">Focal Shap…</span>
  <span style="left:137.4px">0.05</span>
  </div>
  <div class="row" style="top:119.0px;height:17px;line-height:17px">
  <span style="left:43.3px;letter-spacing:-0.28px">Focal Shap…</span>
  <i class="cb" style="left:137.4px;top:1px"></i><svg class="abs" style="left:137.4px;top:1px" width="14" height="14"><path d="M2.9 6.6L5.9 11L10.7 3.2" fill="none" stroke="#111" stroke-width="1.8"/></svg>
  </div>
  <div class="row" style="top:136.0px;height:17px;line-height:17px">
  <span style="left:43.3px">Yaw</span>
  <span style="left:137.4px">3.1104</span>
  </div>
  <div class="row" style="top:153.0px;height:17px;line-height:17px">
  <span style="left:43.3px">Pitch</span>
  <span style="left:137.4px">1.3954</span>
  </div>
  <div class="row" style="top:170.0px;height:17px;line-height:17px">
  <svg class="abs" style="left:28.5px;top:5px" width="5" height="8"><path d="M0.2 0V7.2L3.8 3.6Z" fill="#585858"/></svg>
  <span style="left:43.3px">Focal Point</span>
  <span style="left:137.4px">0.17483; -0.1579…</span>
  </div>
  </div>
  <div class="btn" style="left:931px;top:759px;width:85px">Save</div>
  <div class="btn" style="left:1022px;top:759px;width:85px">Remove</div>
  <div class="btn" style="left:1113px;top:759px;width:85px">Rename</div>

  <!-- Time dock -->
  <div class="dockhead" style="left:0px;top:792px;width:1200px"><span style="left:26px">Time</span>
    <svg class="abs" style="left:3px;top:3px" width="18" height="18" viewBox="0 0 18 18"><circle cx="9" cy="8.9" r="6.8" fill="#fff" stroke="#707070" stroke-width="1.9"/><path d="M8.4 5.2 V9.1 H12.8" fill="none" stroke="#111" stroke-width="1.5"/></svg></div>
  <div class="closebtn" style="left:1180px;top:794px"><svg width="11" height="11" viewBox="0 0 11 11"><defs><radialGradient id="RG" cx="0.5" cy="0.35" r="0.7"><stop offset="0" stop-color="#e85050"/><stop offset="1" stop-color="#c40808"/></radialGradient></defs><path d="M3.3 0.4H7.7L10.6 3.3V7.7L7.7 10.6H3.3L0.4 7.7V3.3Z" fill="url(#RG)"/><path d="M3.6 3.6L7.4 7.4M7.4 3.6L3.6 7.4" stroke="#fff" stroke-width="1.05" stroke-linecap="round" opacity="0.85"/></svg></div>
  <span class="lbl" style="left:11px;top:825px;letter-spacing:-0.4px">ROS Time:</span>
  <div class="inp" style="left:86.5px;top:821px;width:142px">1764165156.80</div>
  <span class="lbl" style="left:235px;top:825px;letter-spacing:-0.4px">ROS Elapsed:</span>
  <div class="inp" style="left:331px;top:821px;width:142px">169.30</div>
  <span class="lbl" style="left:479px;top:825px">Wall Time:</span>
  <div class="inp" style="left:556px;top:821px;width:142px">1764165156.83</div>
  <span class="lbl" style="left:704px;top:825px">Wall Elapsed:</span>
  <div class="inp" style="left:800px;top:821px;width:142px">169.30</div>
  <i class="cb" style="left:1073.5px;top:827px;width:14px;height:14px"></i>
  <span class="lbl" style="left:1092.3px;top:825.5px;letter-spacing:0.3px">Experimental</span>
  <div class="btn" style="left:2px;top:857px;width:53px;height:24px;line-height:22px">Reset</div>
  <span class="lbl" style="left:61.5px;top:860px"><b>Left-Click:</b> Rotate. <b>Middle-Click:</b> Move X/Y. <b>Right-Click/Mouse Wheel:</b> Zoom. <b>Shift:</b> More options.</span>
  <span class="lbl" style="left:1134.6px;top:857px">31 fps</span>
<svg class="abs" style="left:-10px;top:-8px;pointer-events:none" width="1220" height="901" viewBox="0 0 1220 901" shape-rendering="crispEdges">
    <g fill="#ffffff"><rect x="356" y="444" width="1" height="1"/><rect x="937" y="444" width="1" height="1"/><rect x="356" y="447" width="1" height="1"/><rect x="937" y="447" width="1" height="1"/><rect x="356" y="450" width="1" height="1"/><rect x="937" y="450" width="1" height="1"/><rect x="356" y="453" width="1" height="1"/><rect x="937" y="453" width="1" height="1"/><rect x="356" y="456" width="1" height="1"/><rect x="937" y="456" width="1" height="1"/><rect x="356" y="459" width="1" height="1"/><rect x="937" y="459" width="1" height="1"/><rect x="604" y="797" width="1" height="1"/><rect x="607" y="797" width="1" height="1"/><rect x="610" y="797" width="1" height="1"/><rect x="613" y="797" width="1" height="1"/><rect x="616" y="797" width="1" height="1"/><rect x="619" y="797" width="1" height="1"/><rect x="175" y="679" width="1" height="1"/><rect x="178" y="679" width="1" height="1"/><rect x="181" y="679" width="1" height="1"/><rect x="184" y="679" width="1" height="1"/><rect x="187" y="679" width="1" height="1"/><rect x="190" y="679" width="1" height="1"/><rect x="1208" y="880" width="1" height="1"/><rect x="1205" y="883" width="1" height="1"/><rect x="1208" y="883" width="1" height="1"/><rect x="1202" y="886" width="1" height="1"/><rect x="1205" y="886" width="1" height="1"/><rect x="1208" y="886" width="1" height="1"/><rect x="1199" y="889" width="1" height="1"/><rect x="1202" y="889" width="1" height="1"/><rect x="1205" y="889" width="1" height="1"/><rect x="1208" y="889" width="1" height="1"/></g>
    <g fill="#a6a6a6"><rect x="355" y="443" width="1" height="1"/><rect x="936" y="443" width="1" height="1"/><rect x="355" y="446" width="1" height="1"/><rect x="936" y="446" width="1" height="1"/><rect x="355" y="449" width="1" height="1"/><rect x="936" y="449" width="1" height="1"/><rect x="355" y="452" width="1" height="1"/><rect x="936" y="452" width="1" height="1"/><rect x="355" y="455" width="1" height="1"/><rect x="936" y="455" width="1" height="1"/><rect x="355" y="458" width="1" height="1"/><rect x="936" y="458" width="1" height="1"/><rect x="603" y="796" width="1" height="1"/><rect x="606" y="796" width="1" height="1"/><rect x="609" y="796" width="1" height="1"/><rect x="612" y="796" width="1" height="1"/><rect x="615" y="796" width="1" height="1"/><rect x="618" y="796" width="1" height="1"/><rect x="174" y="678" width="1" height="1"/><rect x="177" y="678" width="1" height="1"/><rect x="180" y="678" width="1" height="1"/><rect x="183" y="678" width="1" height="1"/><rect x="186" y="678" width="1" height="1"/><rect x="189" y="678" width="1" height="1"/><rect x="1207" y="879" width="1" height="1"/><rect x="1204" y="882" width="1" height="1"/><rect x="1207" y="882" width="1" height="1"/><rect x="1201" y="885" width="1" height="1"/><rect x="1204" y="885" width="1" height="1"/><rect x="1207" y="885" width="1" height="1"/><rect x="1198" y="888" width="1" height="1"/><rect x="1201" y="888" width="1" height="1"/><rect x="1204" y="888" width="1" height="1"/><rect x="1207" y="888" width="1" height="1"/></g>
    <g shape-rendering="auto" fill="#555"><path d="M368.1 446.2V453.8L364.1 450Z"/><path d="M923 446.2V453.8L927.1 450Z"/></g>
    <rect x="1209" y="45" width="1" height="846" fill="#fbfbfb"/><rect x="10" y="890" width="1200" height="1" fill="#fbfbfb"/>
  </svg>
</div>
</body>
</html>
